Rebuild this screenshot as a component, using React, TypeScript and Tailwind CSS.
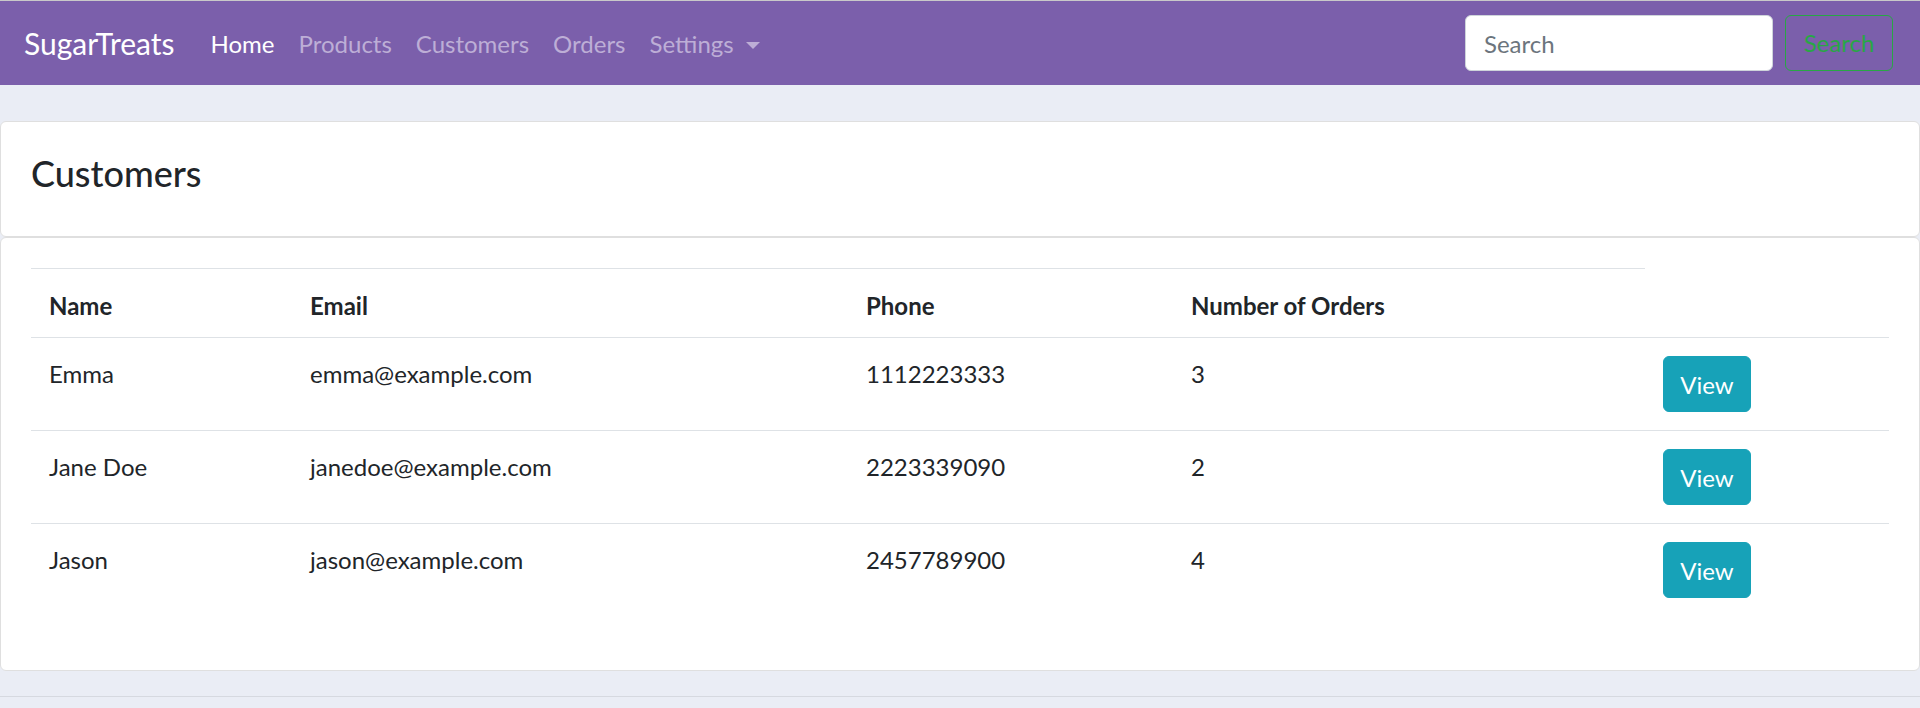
import React from "react";

type Customer = {
  name: string;
  email: string;
  phone: string;
  orders: number;
};

const customers: Customer[] = [
  { name: "Emma", email: "emma@example.com", phone: "1112223333", orders: 3 },
  { name: "Jane Doe", email: "janedoe@example.com", phone: "2223339090", orders: 2 },
  { name: "Jason", email: "jason@example.com", phone: "2457789900", orders: 4 },
];

const links = ["Home", "Products", "Customers", "Orders"];

function Navbar() {
  return (
    <nav className="flex h-[85px] items-center border-t border-[#c9c9c9] bg-[#7b5fab] pl-6 pr-[27px]">
      <a className="mr-6 text-[30px] leading-[45px] text-white" href="#">
        SugarTreats
      </a>
      <ul className="flex items-center pt-[2px]">
        {links.map((l) => (
          <li key={l}>
            <a
              href="#"
              className={
                "block px-3 text-[24px] leading-9 " +
                (l === "Home" ? "text-white" : "text-[#bdaed6]")
              }
            >
              {l}
            </a>
          </li>
        ))}
        <li>
          <a href="#" className="flex items-center px-3 text-[24px] leading-9 text-[#bdaed6]">
            Settings
            <span className="ml-3 mt-[2px] h-0 w-0 border-x-[7px] border-t-[7px] border-x-transparent border-t-[#bdaed6]" />
          </a>
        </li>
      </ul>

      <form className="ml-auto flex items-center gap-3" onSubmit={(e) => e.preventDefault()}>
        <input
          type="search"
          placeholder="Search"
          className="h-[56px] w-[308px] rounded-[6px] border border-[#ced4da] bg-white px-[18px] text-[24px] text-[#495057] outline-none placeholder:text-[#6c757d]"
        />
        <button
          type="submit"
          className="h-[56px] w-[108px] rounded-[6px] border border-[#28a745] text-[24px] leading-9 text-[#28a745]"
        >
          Search
        </button>
      </form>
    </nav>
  );
}

function CustomerTable() {
  return (
    <table className="w-full table-fixed border-collapse text-left text-[24px]">
      <colgroup>
        <col className="w-[261px]" />
        <col className="w-[556px]" />
        <col className="w-[325px]" />
        <col className="w-[472px]" />
        <col />
      </colgroup>
      <thead>
        <tr>
          {["Name", "Email", "Phone", "Number of Orders"].map((h) => (
            <th
              key={h}
              className="h-[69px] border-t border-[#dee2e6] px-[18px] pt-[19px] pb-[13px] align-top font-bold leading-9"
            >
              {h}
            </th>
          ))}
        </tr>
      </thead>
      <tbody>
        {customers.map((c) => (
          <tr key={c.email}>
            <td className="border-t border-[#dee2e6] px-[18px] py-[18px] align-top leading-9">{c.name}</td>
            <td className="border-t border-[#dee2e6] px-[18px] py-[18px] align-top leading-9">{c.email}</td>
            <td className="border-t border-[#dee2e6] px-[18px] py-[18px] align-top leading-9">{c.phone}</td>
            <td className="border-t border-[#dee2e6] px-[18px] py-[18px] align-top leading-9">{c.orders}</td>
            <td className="border-t border-[#dee2e6] px-[18px] py-[18px] align-top">
              <button className="h-[56px] w-[88px] rounded-[6px] border border-[#17a2b8] bg-[#17a2b8] pt-[2px] text-[24px] leading-9 text-white">
                View
              </button>
            </td>
          </tr>
        ))}
      </tbody>
    </table>
  );
}

export default function App() {
  return (
    <div className="min-h-[708px] bg-[#eaedf5] font-['Lato','Open_Sans',sans-serif] text-[#212529]">
      <Navbar />
      <main className="pt-9 pb-[25px]">
        <section className="h-[116px] rounded-[6px] border border-[#dfdfdf] bg-white p-[30px]">
          <h4 className="text-[36px] font-medium leading-[43px]">Customers</h4>
        </section>
        <section className="h-[434px] rounded-[6px] border border-[#dfdfdf] bg-white p-[30px]">
          <CustomerTable />
        </section>
      </main>
      <footer className="h-[12px] border-t border-[#d6d9e0]" />
    </div>
  );
}
